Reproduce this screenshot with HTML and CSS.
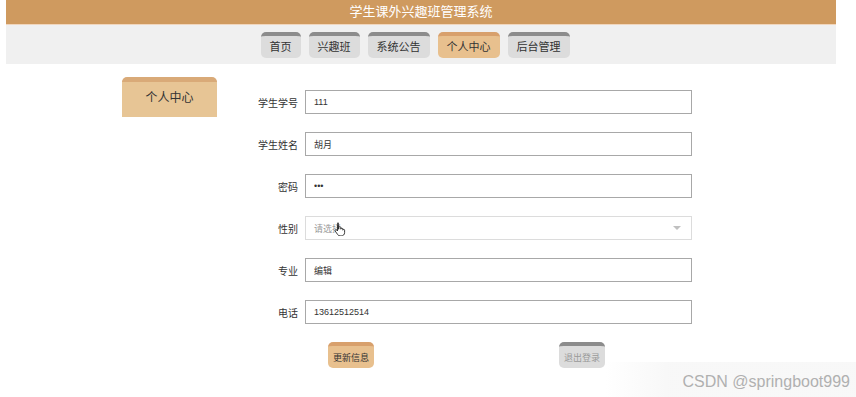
FILE: index.html
```html
<!DOCTYPE html>
<html lang="zh-CN">
<head>
    <meta charset="UTF-8">
    <meta name="viewport" content="width=device-width, initial-scale=1.0">
    <title>学生课外兴趣班管理系统</title>
    <link rel="stylesheet" href="styles.css">
</head>
<body>

    <div class="page">
        <div class="header">学生课外兴趣班管理系统</div>
        <div class="nav">
            <a href="#" class="nav-btn">首页</a>
            <a href="#" class="nav-btn">兴趣班</a>
            <a href="#" class="nav-btn">系统公告</a>
            <a href="#" class="nav-btn active">个人中心</a>
            <a href="#" class="nav-btn">后台管理</a>
        </div>

        <div class="main">
            <div class="side-tab">个人中心</div>

            <form class="info-form">
                <div class="form-row">
                    <label>学生学号</label>
                    <input type="text" value="111">
                </div>
                <div class="form-row">
                    <label>学生姓名</label>
                    <input type="text" value="胡月">
                </div>
                <div class="form-row">
                    <label>密码</label>
                    <input type="password" value="111">
                </div>
                <div class="form-row">
                    <label>性别</label>
                    <div class="select-box">
                        <span>请选择</span>
                        <span class="arrow"></span>
                        <svg class="cursor" width="12" height="14" viewBox="0 0 12 14">
                            <path d="M3.5 1.2c.6 0 1 .4 1 1v5l.3-.1V5.6c0-.6.4-1 1-1s1 .4 1 1v1.6c0-.6.4-1 1-1s1 .4 1 1v1c0-.5.4-.9.9-.9s.9.4.9.9v2.4c0 1.9-1.4 3.3-3.3 3.3H6.1c-1 0-1.8-.5-2.4-1.3L1.2 9.1c-.3-.4-.2-1 .2-1.3s1-.2 1.3.2l.8 1V2.2c0-.6.4-1 1-1z" fill="#fff" stroke="#222" stroke-width="0.9"/>
                        </svg>
                    </div>
                </div>
                <div class="form-row">
                    <label>专业</label>
                    <input type="text" value="编辑">
                </div>
                <div class="form-row">
                    <label>电话</label>
                    <input type="text" value="13612512514">
                </div>
                <div class="form-actions">
                    <button type="button" class="act-btn update">更新信息</button>
                    <button type="button" class="act-btn logout">退出登录</button>
                </div>
            </form>
        </div>
    </div>

    <div class="watermark">CSDN @springboot999</div>

</body>
</html>
```

FILE: styles.css
```css
body {
    font-family: "Liberation Sans", "Noto Sans CJK SC", sans-serif;
    background-color: #fff;
    margin: 0;
    padding: 0;
    color: #333;
}
.page {
    width: 830px;
    margin-left: 6px;
}
.header {
    height: 25px;
    line-height: 24px;
    background-color: #cf9a5f;
    border-bottom: 1px solid #f1d6bd;
    color: #fff;
    font-size: 13px;
    text-align: center;
    box-sizing: border-box;
}
.nav {
    height: 39px;
    background-color: #f0f0f0;
    display: flex;
    justify-content: center;
    gap: 8px;
    padding-top: 7px;
    padding-right: 12px;
    box-sizing: border-box;
}
.nav-btn {
    height: 26px;
    line-height: 22px;
    padding: 0 9px;
    background-color: #dcdcdc;
    border-top: 4px solid #8c8c8c;
    border-radius: 5px;
    color: #333;
    font-size: 11px;
    text-decoration: none;
    box-sizing: border-box;
}
.nav-btn.active {
    background-color: #e8c08e;
    border-top-color: #d8a06c;
}
.main {
    display: flex;
    padding-left: 116px;
    padding-top: 13px;
}
.side-tab {
    width: 95px;
    height: 40px;
    line-height: 33px;
    background-color: #e7c595;
    border-top: 5px solid #d9aa78;
    border-radius: 5px 5px 0 0;
    text-align: center;
    font-size: 12px;
    color: #333;
    box-sizing: border-box;
}
.info-form {
    margin-top: 13px;
    margin-left: 21px;
}
.form-row {
    display: flex;
    align-items: center;
    gap: 7px;
    margin-bottom: 18px;
}
.form-row label {
    width: 60px;
    text-align: right;
    font-size: 10px;
    color: #333;
}
.form-row input {
    width: 387px;
    height: 24px;
    padding: 0 8px;
    border: 1px solid #a8a8a8;
    font-family: "Liberation Sans", "Noto Sans CJK SC", sans-serif;
    font-size: 9px;
    color: #333;
    box-sizing: border-box;
    outline: none;
}
.select-box {
    position: relative;
    width: 387px;
    height: 24px;
    padding: 0 8px;
    border: 1px solid #dcdcdc;
    display: flex;
    align-items: center;
    justify-content: space-between;
    font-size: 9px;
    color: #999;
    box-sizing: border-box;
}
.select-box .arrow {
    width: 0;
    height: 0;
    border-left: 4px solid transparent;
    border-right: 4px solid transparent;
    border-top: 4px solid #c0c0c0;
    margin-right: 2px;
}
.select-box .cursor {
    position: absolute;
    left: 28px;
    top: 5px;
}
.form-actions {
    display: flex;
    padding-left: 90px;
}
.act-btn {
    width: 46px;
    height: 26px;
    padding: 0;
    border: none;
    border-radius: 5px;
    font-family: "Liberation Sans", "Noto Sans CJK SC", sans-serif;
    font-size: 9px;
    cursor: pointer;
}
.act-btn.update {
    background-color: #e8c08e;
    border-top: 4px solid #d8a06c;
    color: #333;
}
.act-btn.logout {
    margin-left: 185px;
    background-color: #dcdcdc;
    border-top: 4px solid #8c8c8c;
    color: #999;
}
.watermark {
    position: absolute;
    left: 605px;
    top: 362px;
    width: 251px;
    height: 35px;
    box-sizing: border-box;
    padding-right: 6px;
    text-align: right;
    line-height: 40px;
    font-size: 16px;
    color: #b0b0b0;
    background: linear-gradient(to right, rgba(246, 246, 246, 0), rgba(246, 246, 246, 0.8) 25%);
}
```
